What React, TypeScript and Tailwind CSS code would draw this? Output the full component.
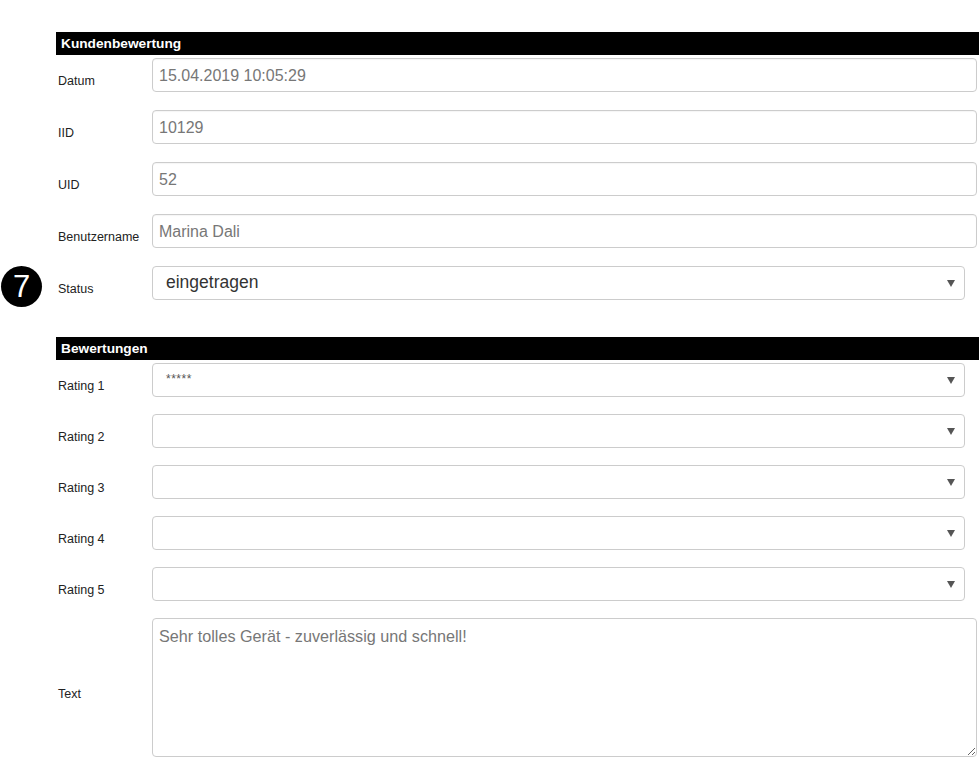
import React from "react";

const font = { fontFamily: '"Liberation Sans", Arial, sans-serif' };

function SectionHeader({ title }: { title: string }) {
  return (
    <div className="h-[23px] bg-black text-white font-bold text-[13.7px] leading-[24px] pl-[5px]">
      {title}
    </div>
  );
}

function Label({ text }: { text: string }) {
  return (
    <div className="w-[96px] shrink-0 pl-[2px] text-[12.5px] leading-[14px] text-[#222] mt-[12px]">
      {text}
    </div>
  );
}

function InputRow({ label, value }: { label: string; value: string }) {
  return (
    <div className="flex items-center mb-[18px]">
      <Label text={label} />
      <input
        readOnly
        value={value}
        className="flex-1 mr-[2px] h-[34px] rounded-[4px] border border-[#ccc] bg-white px-[6px] pt-[1px] text-[16px] text-[#777] outline-none shadow-[inset_0_1px_1px_rgba(0,0,0,0.04)]"
        style={font}
      />
    </div>
  );
}

function Arrow() {
  return (
    <svg width="8" height="7" viewBox="0 0 8 7" className="shrink-0">
      <path d="M0 0 H8 L4 7 Z" fill="#555" />
    </svg>
  );
}

function SelectRow({
  label,
  children,
  mb = "mb-[17px]",
}: {
  label: string;
  children?: React.ReactNode;
  mb?: string;
}) {
  return (
    <div className={`flex items-center ${mb}`}>
      <Label text={label} />
      <div className="flex-1 mr-[14px] h-[34px] rounded-[4px] border border-[#ccc] bg-white flex items-center pl-[13px] pr-[9px]">
        <div className="flex-1 h-full relative">{children}</div>
        <Arrow />
      </div>
    </div>
  );
}

export default function App() {
  return (
    <div className="relative w-[979px] h-[779px] bg-white overflow-hidden" style={font}>
      <div className="absolute left-[1px] top-[266px] w-[41px] h-[41px] rounded-full bg-black text-white flex items-center justify-center text-[31px] leading-none">
        7
      </div>
      <div className="pl-[56px] pt-[32px]">
        <SectionHeader title="Kundenbewertung" />
        <div className="pt-[3px]">
          <InputRow label="Datum" value="15.04.2019 10:05:29" />
          <InputRow label="IID" value="10129" />
          <InputRow label="UID" value="52" />
          <InputRow label="Benutzername" value="Marina Dali" />
          <SelectRow label="Status" mb="mb-[37px]">
            <div className="h-full flex items-center text-[17.5px] text-[#333] -mt-[1px]">eingetragen</div>
          </SelectRow>
        </div>
        <SectionHeader title="Bewertungen" />
        <div className="pt-[3px]">
          <SelectRow label="Rating 1">
            <div className="pt-[6px] text-[12px] text-[#555] tracking-[0.5px]">*****</div>
          </SelectRow>
          <SelectRow label="Rating 2" />
          <SelectRow label="Rating 3" />
          <SelectRow label="Rating 4" />
          <SelectRow label="Rating 5" />
          <div className="flex items-center">
            <Label text="Text" />
            <textarea
              readOnly
              defaultValue="Sehr tolles Gerät - zuverlässig und schnell!"
              className="flex-1 mr-[2px] h-[139px] rounded-[4px] border border-[#ccc] bg-white px-[6px] py-[6px] text-[16.2px] leading-[22px] text-[#777] outline-none resize"
              style={font}
            />
          </div>
        </div>
      </div>
    </div>
  );
}
